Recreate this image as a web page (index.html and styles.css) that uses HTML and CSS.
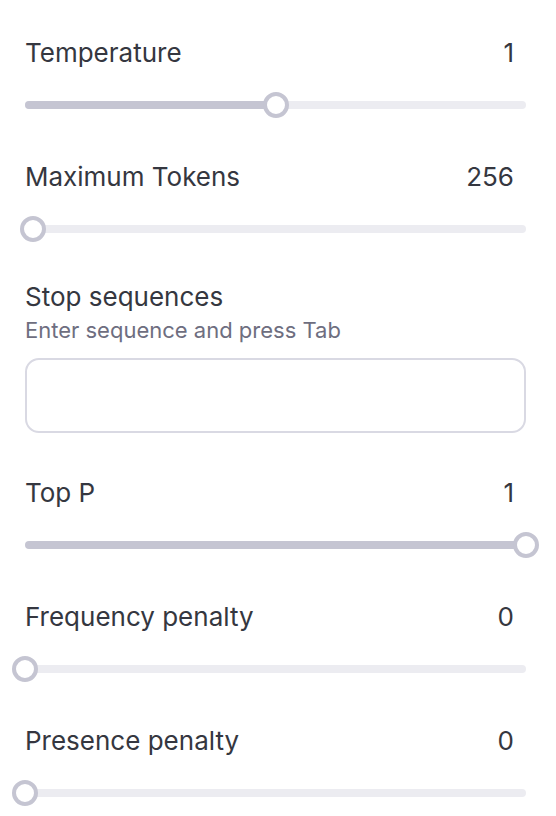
FILE: index.html
```html
<!DOCTYPE html>
<html lang="en">
<head>
<meta charset="utf-8">
<title>Parameters</title>
<link rel="stylesheet" href="styles.css">
</head>
<body>
<div class="panel">
  <section class="field">
    <div class="head"><span class="label">Temperature</span><span class="value">1</span></div>
    <div class="range">
      <div class="track"><div class="fill" style="width:50%"></div></div>
      <div class="thumb" style="left:50%"></div>
    </div>
  </section>
  <section class="field">
    <div class="head"><span class="label">Maximum Tokens</span><span class="value">256</span></div>
    <div class="range">
      <div class="track"><div class="fill" style="width:1.6%"></div></div>
      <div class="thumb" style="left:1.6%"></div>
    </div>
  </section>
  <section class="field stop">
    <div class="head"><span class="label">Stop sequences</span></div>
    <div class="hint">Enter sequence and press Tab</div>
    <div class="input" tabindex="0"></div>
  </section>
  <section class="field">
    <div class="head"><span class="label">Top P</span><span class="value">1</span></div>
    <div class="range">
      <div class="track"><div class="fill" style="width:100%"></div></div>
      <div class="thumb" style="left:100%"></div>
    </div>
  </section>
  <section class="field">
    <div class="head"><span class="label">Frequency penalty</span><span class="value">0</span></div>
    <div class="range">
      <div class="track"><div class="fill" style="width:0%"></div></div>
      <div class="thumb" style="left:0%"></div>
    </div>
  </section>
  <section class="field">
    <div class="head"><span class="label">Presence penalty</span><span class="value">0</span></div>
    <div class="range">
      <div class="track"><div class="fill" style="width:0%"></div></div>
      <div class="thumb" style="left:0%"></div>
    </div>
  </section>
</div>
</body>
</html>
```
FILE: styles.css
```css
html, body {
  margin: 0;
  padding: 0;
  background: #ffffff;
}
body {
  font-family: Inter, "Noto Sans", "Liberation Sans", sans-serif;
  color: #353740;
}
.panel {
  width: 501px;
  padding: 37px 0 0 25px;
  display: flex;
  flex-direction: column;
}
.field {
  display: flex;
  flex-direction: column;
  padding-bottom: 42px;
}
.head {
  display: flex;
  justify-content: space-between;
  align-items: baseline;
  font-size: 26px;
  line-height: 32px;
  padding-right: 12px;
}
.range {
  position: relative;
  height: 28px;
  margin-top: 22px;
  display: flex;
  align-items: center;
}
.track {
  width: 100%;
  height: 8px;
  border-radius: 4px;
  background: #ececf1;
  overflow: hidden;
}
.fill {
  height: 100%;
  background: #c5c5d2;
}
.thumb {
  position: absolute;
  top: 1px;
  width: 26px;
  height: 26px;
  box-sizing: border-box;
  margin-left: -13px;
  border-radius: 50%;
  border: 4px solid #c5c5d2;
  background: #ffffff;
}
.hint {
  font-size: 22px;
  line-height: 28px;
  color: #6e6e80;
  margin-top: 3px;
}
.input {
  margin-top: 14px;
  height: 75px;
  box-sizing: border-box;
  border: 2px solid #d9d9e3;
  border-radius: 14px;
}
.field.stop {
  margin-top: -4px;
  padding-bottom: 44px;
}
```
